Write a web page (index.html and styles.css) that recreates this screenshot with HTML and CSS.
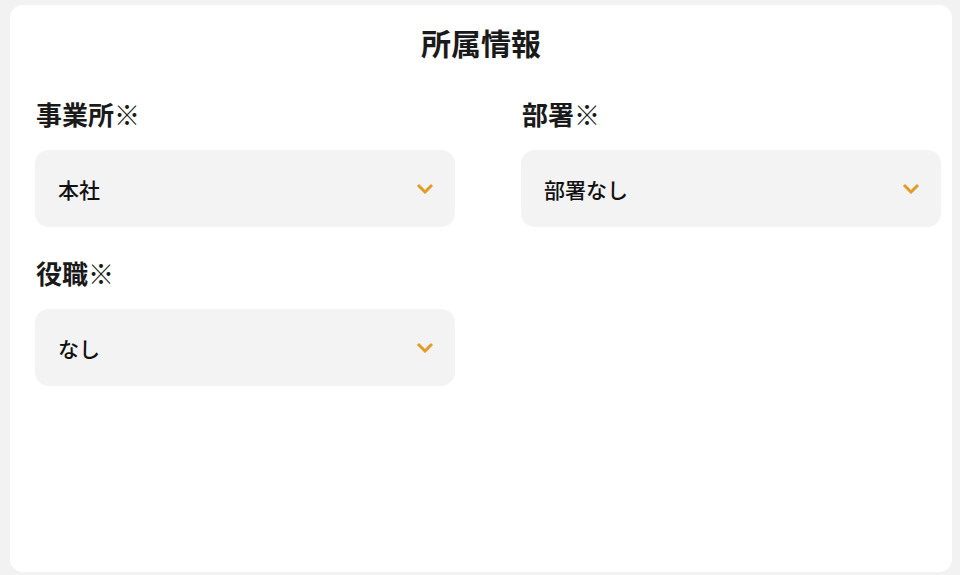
FILE: index.html
```html
<!DOCTYPE html>
<html lang="ja">
<head>
    <meta charset="UTF-8">
    <meta name="viewport" content="width=device-width, initial-scale=1.0">
    <title>所属情報</title>
    <link rel="stylesheet" href="styles.css">
</head>
<body>
    <div class="card">
        <h2 class="card-title">所属情報</h2>

        <div class="fields">
            <div class="field">
                <label for="office">事業所※</label>
                <div class="select-wrap">
                    <select id="office">
                        <option>本社</option>
                    </select>
                    <svg class="chevron" width="18" height="11" viewBox="0 0 18 11">
                        <polyline points="2,2 9,9 16,2" fill="none" stroke="#e39b26" stroke-width="3" stroke-linejoin="miter"/>
                    </svg>
                </div>
            </div>

            <div class="field">
                <label for="dept">部署※</label>
                <div class="select-wrap">
                    <select id="dept">
                        <option>部署なし</option>
                    </select>
                    <svg class="chevron" width="18" height="11" viewBox="0 0 18 11">
                        <polyline points="2,2 9,9 16,2" fill="none" stroke="#e39b26" stroke-width="3" stroke-linejoin="miter"/>
                    </svg>
                </div>
            </div>

            <div class="field">
                <label for="position">役職※</label>
                <div class="select-wrap">
                    <select id="position">
                        <option>なし</option>
                    </select>
                    <svg class="chevron" width="18" height="11" viewBox="0 0 18 11">
                        <polyline points="2,2 9,9 16,2" fill="none" stroke="#e39b26" stroke-width="3" stroke-linejoin="miter"/>
                    </svg>
                </div>
            </div>
        </div>
    </div>
</body>
</html>
```

FILE: styles.css
```css
body {
    margin: 0;
    padding: 5px 8px 3px 10px;
    background-color: #f2f2f2;
    font-family: "Noto Sans CJK JP", "Noto Sans", sans-serif;
    color: #1a1a1a;
}
.card {
    background-color: #fff;
    border-radius: 13px;
    height: 567px;
    box-sizing: border-box;
    padding: 16px 12px 0 25px;
}
.card-title {
    margin: 0 0 33px -13px;
    text-align: center;
    font-size: 30px;
    line-height: 42px;
    font-weight: 700;
}
.fields {
    display: grid;
    grid-template-columns: 420px 420px;
    column-gap: 66px;
    row-gap: 28px;
}
.field label {
    display: block;
    font-size: 26px;
    line-height: 36px;
    font-weight: 700;
    margin-bottom: 18px;
    padding-left: 1px;
}
.select-wrap {
    position: relative;
}
.select-wrap select {
    appearance: none;
    -webkit-appearance: none;
    width: 100%;
    height: 77px;
    border: none;
    border-radius: 14px;
    background-color: #f3f3f3;
    padding: 0 50px 0 23px;
    font-family: "Noto Sans CJK JP", "Noto Sans", sans-serif;
    font-size: 21px;
    font-weight: 500;
    color: #111;
    outline: none;
}
.chevron {
    position: absolute;
    right: 21px;
    top: 33px;
    pointer-events: none;
}
```
